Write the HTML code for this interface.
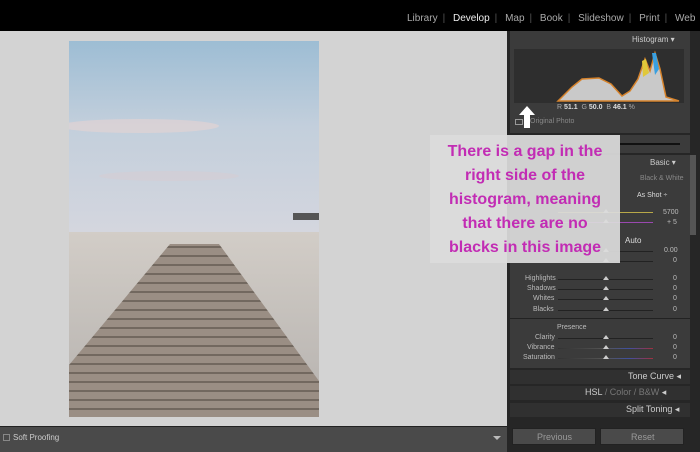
<!DOCTYPE html>
<html><head><style>
*{margin:0;padding:0;box-sizing:border-box}
body{width:700px;height:452px;overflow:hidden;background:#d3d3d3;font-family:"Liberation Sans",sans-serif;position:relative}
.a{position:absolute}
.t{color:#bbb;font-size:8px}
.sl{position:absolute;height:1px;background:#222;left:558px;width:95px}
.sl::after{content:"";position:absolute;left:45px;top:-3px;border-left:3px solid transparent;border-right:3px solid transparent;border-bottom:4px solid #ccc}
</style></head><body>
<div class="a" style="left:0;top:0;width:700px;height:31px;background:#000"></div>
<div class="a" style="left:407px;top:13px;font-size:10px;color:#aaa;white-space:nowrap">
<span style="margin-right:5px">Library</span><span style="color:#555">|</span>
<span style="color:#eee;margin:0 5px">Develop</span><span style="color:#555">|</span>
<span style="margin:0 5px">Map</span><span style="color:#555">|</span>
<span style="margin:0 5px">Book</span><span style="color:#555">|</span>
<span style="margin:0 5px">Slideshow</span><span style="color:#555">|</span>
<span style="margin:0 5px">Print</span><span style="color:#555">|</span>
<span style="margin-left:5px">Web</span></div>
<!-- photo -->
<svg class="a" style="left:69px;top:41px" width="250" height="376" viewBox="0 0 250 376">
<defs>
<linearGradient id="sky" x1="0" y1="0" x2="0" y2="1"><stop offset="0" stop-color="#9dbdd4"/><stop offset=".45" stop-color="#c3cfdc"/><stop offset="1" stop-color="#d4d6de"/></linearGradient>
<linearGradient id="sand" x1="0" y1="0" x2="0" y2="1"><stop offset="0" stop-color="#d2cdc7"/><stop offset="1" stop-color="#b5b1ae"/></linearGradient>
<pattern id="pl" width="250" height="9" patternUnits="userSpaceOnUse"><rect width="250" height="9" fill="#9a8e84"/><rect y="7" width="250" height="2" fill="#72685f"/></pattern>
</defs>
<rect width="250" height="191" fill="url(#sky)"/>
<ellipse cx="70" cy="85" rx="80" ry="7" fill="#e6d4d2" opacity=".6"/>
<ellipse cx="100" cy="135" rx="70" ry="5" fill="#d8ccd2" opacity=".5"/>
<rect y="191" width="250" height="185" fill="url(#sand)"/>
<rect x="224" y="172" width="26" height="7" fill="#555"/>
<polygon points="101,203 150,203 250,340 250,376 0,376 0,324" fill="url(#pl)"/>
</svg>
<!-- bottom bar -->
<div class="a" style="left:0;top:426px;width:507px;height:26px;background:#4a4a4a;border-top:1px solid #222"></div>
<div class="a" style="left:3px;top:434px;width:7px;height:7px;border:1px solid #888"></div>
<div class="a t" style="left:13px;top:433px;font-size:8px;color:#ccc">Soft Proofing</div>
<div class="a" style="left:493px;top:436px;border-left:4px solid transparent;border-right:4px solid transparent;border-top:4px solid #bbb"></div>
<!-- right panel -->
<div class="a" style="left:507px;top:31px;width:193px;height:421px;background:#262626"></div>
<div class="a" style="left:510px;top:31px;width:180px;height:102px;background:#3b3b3b"></div>
<div class="a t" style="left:632px;top:35px;color:#ccc">Histogram ▾</div>
<svg class="a" style="left:514px;top:49px" width="170" height="54">
<rect width="170" height="54" fill="#2e2e2e"/>
<path d="M44 52 L58 38 L68 30 L85 29 L97 35 L108 47 L116 42 L124 30 L131 10 L136 22 L141 4 L146 20 L152 48 L165 52 Z" fill="#c9c9c9" stroke="#d6832c" stroke-width="1.5"/>
<path d="M138 4 L142 4 L145 20 L141 26 Z" fill="#3aa0e0"/>
<path d="M128 12 L132 10 L135 24 L129 28 Z" fill="#e0c83a"/>
</svg>
<div class="a t" style="left:557px;top:104px;font-size:7px;color:#aaa">R <b style="color:#ddd">51.1</b> &nbsp;G <b style="color:#ddd">50.0</b> &nbsp;B <b style="color:#ddd">46.1</b> %</div>
<div class="a t" style="left:530px;top:118px;font-size:7px;color:#888">Original Photo</div>
<div class="a" style="left:515px;top:119px;width:8px;height:6px;border:1px solid #999"></div>
<svg class="a" style="left:519px;top:106px" width="16" height="22"><polygon points="8,0 16,9 11,9 11,22 5,22 5,9 0,9" fill="#fff"/></svg>
<div class="a" style="left:510px;top:135px;width:180px;height:18px;background:#3b3b3b"></div>
<div class="a" style="left:620px;top:143px;width:60px;height:2px;background:#111"></div>
<div class="a" style="left:510px;top:155px;width:180px;height:213px;background:#3b3b3b"></div>
<div class="a t" style="left:650px;top:158px;color:#ccc">Basic ▾</div>
<div class="a t" style="left:640px;top:175px;font-size:7px;color:#888">Black &amp; White</div>
<div class="a t" style="left:637px;top:192px;font-size:7px;color:#ddd">As Shot ÷</div>
<div class="sl" style="top:212px;background:#b8a848"></div><div class="a t" style="left:663px;top:209px;font-size:7px">5700</div>
<div class="sl" style="top:222px;background:#9a48b0"></div><div class="a t" style="left:667px;top:219px;font-size:7px">+ 5</div>
<div class="a t" style="left:625px;top:236px;color:#ddd">Auto</div>
<div class="sl" style="top:251px"></div><div class="a t" style="left:664px;top:247px;font-size:7px">0.00</div>
<div class="sl" style="top:261px"></div><div class="a t" style="left:673px;top:257px;font-size:7px">0</div>
<div class="a t" style="left:525px;top:275px;font-size:7px">Highlights</div><div class="sl" style="top:279px"></div><div class="a t" style="left:673px;top:275px;font-size:7px">0</div>
<div class="a t" style="left:527px;top:285px;font-size:7px">Shadows</div><div class="sl" style="top:289px"></div><div class="a t" style="left:673px;top:285px;font-size:7px">0</div>
<div class="a t" style="left:533px;top:295px;font-size:7px">Whites</div><div class="sl" style="top:299px"></div><div class="a t" style="left:673px;top:295px;font-size:7px">0</div>
<div class="a t" style="left:533px;top:306px;font-size:7px">Blacks</div><div class="sl" style="top:310px"></div><div class="a t" style="left:673px;top:306px;font-size:7px">0</div>
<div class="a" style="left:510px;top:318px;width:180px;height:1px;background:#222"></div>
<div class="a t" style="left:557px;top:324px;font-size:7px">Presence</div>
<div class="a t" style="left:535px;top:334px;font-size:7px">Clarity</div><div class="sl" style="top:338px"></div><div class="a t" style="left:673px;top:334px;font-size:7px">0</div>
<div class="a t" style="left:527px;top:344px;font-size:7px">Vibrance</div><div class="sl" style="top:348px;background:linear-gradient(90deg,#333,#555 50%,#4050a0 75%,#a03040)"></div><div class="a t" style="left:673px;top:344px;font-size:7px">0</div>
<div class="a t" style="left:523px;top:354px;font-size:7px">Saturation</div><div class="sl" style="top:358px;background:linear-gradient(90deg,#333,#555 50%,#4050a0 75%,#a03040)"></div><div class="a t" style="left:673px;top:354px;font-size:7px">0</div>
<div class="a" style="left:510px;top:370px;width:180px;height:14px;background:#303030"></div>
<div class="a t" style="left:628px;top:371px;font-size:9px;color:#ccc">Tone Curve ◂</div>
<div class="a" style="left:510px;top:386px;width:180px;height:14px;background:#303030"></div>
<div class="a t" style="left:585px;top:387px;font-size:9px;color:#ccc">HSL <span style="color:#777">/ Color / B&amp;W</span> ◂</div>
<div class="a" style="left:510px;top:403px;width:180px;height:14px;background:#303030"></div>
<div class="a t" style="left:626px;top:404px;font-size:9px;color:#ccc">Split Toning ◂</div>
<div class="a" style="left:512px;top:428px;width:84px;height:17px;background:#4a4a4a;border:1px solid #222"></div>
<div class="a t" style="left:537px;top:432px;font-size:9px;color:#999">Previous</div>
<div class="a" style="left:600px;top:428px;width:84px;height:17px;background:#4a4a4a;border:1px solid #222"></div>
<div class="a t" style="left:631px;top:432px;font-size:9px;color:#999">Reset</div>
<div class="a" style="left:690px;top:155px;width:6px;height:80px;background:#555"></div>
<!-- overlay -->
<div class="a" style="left:430px;top:135px;width:190px;height:128px;background:rgba(220,220,220,.93);color:#c22cb4;font-weight:bold;font-size:16px;line-height:24px;text-align:center;padding-top:5px;white-space:nowrap">There is a gap in the<br>right side of the<br>histogram, meaning<br>that there are no<br>blacks in this image</div>
</body></html>
